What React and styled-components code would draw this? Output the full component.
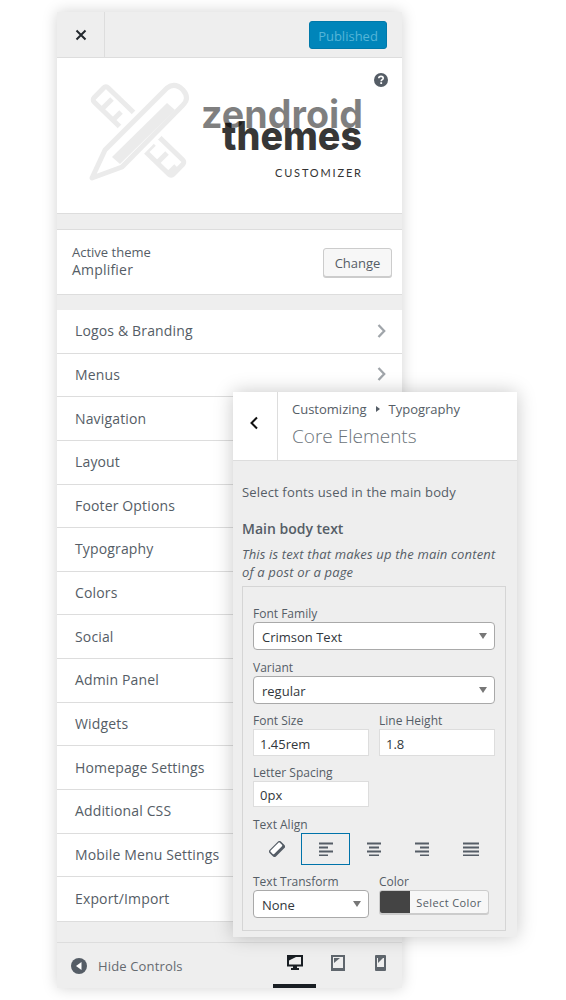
import React from 'react';
import styled, { createGlobalStyle } from 'styled-components';

const GlobalStyle = createGlobalStyle`
  html, body { margin: 0; padding: 0; background: #fff; }
  body {
    font-family: "Open Sans", "Noto Sans", "Liberation Sans", sans-serif;
    color: #555d66;
  }
  * { box-sizing: border-box; }
`;

const Stage = styled.div`
  position: relative;
  width: 566px;
  height: 1000px;
  padding: 12px 0 0 57px;
  overflow: hidden;
`;

/* main customizer column */
const Panel = styled.div`
  width: 345px;
  height: 976px;
  display: flex;
  flex-direction: column;
  background: #eee;
  box-shadow: 0 0 14px rgba(0, 0, 0, 0.18);
`;

const Header = styled.div`
  height: 46px;
  flex: none;
  display: flex;
  align-items: center;
  justify-content: space-between;
  padding-right: 15px;
  border-bottom: 1px solid #ddd;
`;

const CloseCell = styled.div`
  width: 48px;
  height: 45px;
  display: flex;
  align-items: center;
  justify-content: center;
  border-right: 1px solid #ddd;
  color: #23282d;
`;

const PublishButton = styled.div`
  width: 78px;
  height: 28px;
  margin-top: 1px;
  padding-top: 1px;
  display: flex;
  align-items: center;
  justify-content: center;
  font-size: 13px;
  color: #55b5d8;
  background: #0085ba;
  border: 1px solid #0079aa;
  border-radius: 3px;
`;

const LogoBox = styled.div`
  position: relative;
  height: 156px;
  flex: none;
  background: #fff;
  border-bottom: 1px solid #ddd;
`;

const HelpIcon = styled.svg`
  position: absolute;
  top: 15px;
  right: 14px;
`;

const Gap = styled.div`
  height: ${(p) => p.$h}px;
  flex: none;
`;

const ThemeBox = styled.div`
  height: 66px;
  flex: none;
  display: flex;
  align-items: center;
  justify-content: space-between;
  padding: 0 10px 0 15px;
  background: #fff;
  border-top: 1px solid #ddd;
  border-bottom: 1px solid #ddd;
`;

const ThemeText = styled.div`
  padding-bottom: 2px;
`;

const ThemeLabel = styled.div`
  font-size: 13px;
  line-height: 18px;
`;

const ThemeName = styled.div`
  font-size: 14px;
  line-height: 18px;
  font-weight: 500;
  letter-spacing: 0.2px;
`;

const ChangeButton = styled.div`
  width: 69px;
  height: 29px;
  padding-top: 1px;
  display: flex;
  align-items: center;
  justify-content: center;
  font-size: 13px;
  background: #f7f7f7;
  border: 1px solid #ccc;
  border-radius: 3px;
  box-shadow: 0 1px 0 #ccc;
`;

const Menu = styled.div`
  flex: none;
  background: #fff;
  border-bottom: 1px solid #ddd;
`;

const MenuRow = styled.div`
  height: 43.64px;
  display: flex;
  align-items: center;
  justify-content: space-between;
  padding: 0 16px 1px 18px;
  font-size: 14px;
  font-weight: 500;
  letter-spacing: 0.15px;
  border-bottom: ${(p) => (p.$last ? 'none' : '1px solid #ddd')};
`;

const Chevron = styled.svg`
  color: #a0a5aa;
`;

const Footer = styled.div`
  position: relative;
  height: 46px;
  margin-top: auto;
  flex: none;
  display: flex;
  align-items: center;
  padding-left: 14px;
  border-top: 1px solid #ddd;
`;

const HideLabel = styled.div`
  margin-left: 11px;
  font-size: 13px;
  letter-spacing: 0.15px;
  color: #656a70;
`;

const Devices = styled.div`
  margin-left: auto;
  display: flex;
  height: 100%;
`;

const DeviceTab = styled.div`
  width: 43px;
  display: flex;
  align-items: center;
  justify-content: center;
  padding-bottom: 1px;
  color: ${(p) => (p.$active ? '#191e23' : '#5f666d')};
  border-bottom: 4px solid ${(p) => (p.$active ? '#191e23' : 'transparent')};
`;

/* floating typography section */
const Section = styled.div`
  position: absolute;
  left: 233px;
  top: 392px;
  width: 284px;
  height: 545px;
  background: #eee;
  box-shadow: 0 0 18px rgba(0, 0, 0, 0.22);
`;

const SectionHead = styled.div`
  height: 69px;
  display: flex;
  background: #fff;
  border-bottom: 1px solid #ddd;
`;

const BackCell = styled.div`
  width: 45px;
  padding: 0 3px 6px 0;
  display: flex;
  align-items: center;
  justify-content: center;
  border-right: 1px solid #ddd;
  color: #111;
`;

const HeadText = styled.div`
  padding: 8px 0 0 14px;
`;

const Crumbs = styled.div`
  display: flex;
  align-items: center;
  gap: 9px;
  font-size: 13px;
  line-height: 18px;
`;

const CrumbArrow = styled.svg`
  color: #555d66;
`;

const SectionTitle = styled.div`
  margin-top: 5px;
  font-size: 19px;
  line-height: 26px;
  font-weight: 300;
  color: #6b737a;
`;

const SectionBody = styled.div`
  padding: 22px 11px 0 9px;
`;

const Intro = styled.div`
  font-size: 13px;
  line-height: 18px;
  letter-spacing: 0.16px;
`;

const GroupTitle = styled.div`
  margin-top: 18px;
  font-size: 14px;
  line-height: 20px;
  font-weight: 600;
`;

const GroupNote = styled.div`
  margin-top: 6px;
  font-size: 13px;
  line-height: 18px;
  font-style: italic;
  letter-spacing: 0.16px;
`;

const Fields = styled.div`
  height: 345px;
  margin-top: 5px;
  padding: 18px 10px 0;
  border: 1px solid #d5d5d5;
`;

const FieldLabel = styled.div`
  font-size: 12px;
  line-height: 16px;
  padding-top: 1px;
`;

const FieldRow = styled.div`
  display: grid;
  grid-template-columns: 116px 116px;
  gap: 10px;
  margin-top: ${(p) => p.$top || 0}px;
`;

const Stacked = styled.div`
  margin-top: ${(p) => p.$top || 0}px;
  width: ${(p) => p.$w || 'auto'};
`;

const SelectBox = styled.div`
  position: relative;
  height: 28px;
  display: flex;
  align-items: center;
  padding: 2px 0 0 8px;
  font-size: 13px;
  color: #32373c;
  background: #fff;
  border: 1px solid #a9a9a9;
  border-radius: 4px;
`;

const Caret = styled.span`
  position: absolute;
  right: 7px;
  top: 10px;
  width: 0;
  height: 0;
  border-left: 4px solid transparent;
  border-right: 4px solid transparent;
  border-top: 6px solid #777;
`;

const TextInput = styled.div`
  height: ${(p) => p.$h || 26}px;
  display: flex;
  align-items: center;
  padding: 2px 0 0 6px;
  font-size: 13px;
  color: #32373c;
  background: #fff;
  border: 1px solid #ddd;
`;

const AlignRow = styled.div`
  display: grid;
  grid-template-columns: repeat(5, 48.4px);
  height: 32px;
`;

const AlignCell = styled.div`
  display: flex;
  align-items: center;
  justify-content: center;
  color: #555d66;
  border: 1px solid ${(p) => (p.$active ? '#0073aa' : 'transparent')};
`;

const ColorButton = styled.div`
  width: 110px;
  height: 24px;
  display: flex;
  font-size: 11px;
  background: #f7f7f7;
  border: 1px solid #ccc;
  border-radius: 3px;
  box-shadow: 0 1px 0 #ccc;
  overflow: hidden;
`;

const Swatch = styled.div`
  width: 30px;
  background: #444;
`;

const ColorText = styled.div`
  flex: 1;
  display: flex;
  align-items: center;
  justify-content: center;
  letter-spacing: 0.4px;
`;

const menuItems = [
  'Logos & Branding', 'Menus', 'Navigation', 'Layout', 'Footer Options',
  'Typography', 'Colors', 'Social', 'Admin Panel', 'Widgets',
  'Homepage Settings', 'Additional CSS', 'Mobile Menu Settings', 'Export/Import',
];

const LogoArt = () => (
  <svg width="345" height="155" style={{ display: 'block' }}>
    {/* ruler with the pencil laid over it */}
    <g transform="translate(28 17)" fill="none" strokeLinejoin="round">
      <g stroke="#ebebeb" strokeWidth="5">
        <rect x="-55" y="-10" width="110" height="20" rx="3" transform="translate(53.5 56) rotate(44)" />
        <path d="M18 33L27 24M29 44L36 37M39 55L46 48" />
        <path d="M62 76L69 69M73 87L82 78M84 98L91 91" />
      </g>
      <path d="M7 103L20 75L82 13Q90 7 98 15Q105 23 98 30L37 92Z" fill="#fff" stroke="#fff" strokeWidth="13" />
      <path d="M7 103L20 75L82 13Q90 7 98 15Q105 23 98 30L37 92Z" stroke="#ebebeb" strokeWidth="5" />
      <path d="M27 82L35 89L90 35L82 28Z" fill="#ebebeb" />
    </g>
    {/* word mark, real text fitted to the logo width */}
    <text x="144" y="70" textLength="162" lengthAdjust="spacingAndGlyphs" fontFamily="Inter, sans-serif" fontWeight="700" fontSize="39" fill="#000" fillOpacity="0.5">zendroid</text>
    <text x="165" y="92" textLength="140" lengthAdjust="spacingAndGlyphs" fontFamily="Inter, sans-serif" fontWeight="800" fontSize="40" fill="#000" fillOpacity="0.8">themes</text>
    <text x="218" y="119" textLength="86" fontFamily="Lato, sans-serif" fontWeight="400" fontSize="11" fill="#333">CUSTOMIZER</text>
  </svg>
);

const DesktopIcon = () => (
  <svg width="16" height="16" viewBox="0 0 16 16" fill="currentColor">
    <path fillRule="evenodd" d="M0 0h16v11.5H10V13h2v2H4v-2h2v-1.5H0zM2 2v7.5h12V2z" />
    <path d="M2 2h7L2 5.5z" />
  </svg>
);

const TabletIcon = () => (
  <svg width="14" height="16" viewBox="0 0 14 16" fill="currentColor">
    <path fillRule="evenodd" d="M0 0h14v16H0zM2 2v11h10V2z" />
    <path d="M3 3h6L3 8z" />
  </svg>
);

const MobileIcon = () => (
  <svg width="11" height="16" viewBox="0 0 11 16" fill="currentColor">
    <path fillRule="evenodd" d="M1 0h9q1 0 1 1v14q0 1-1 1H1q-1 0-1-1V1q0-1 1-1zM2 3v9h7V3z" />
    <path d="M3 3h5L3 8z" />
  </svg>
);

const AlignIcon = ({ lines }) => (
  <svg width="16" height="14" viewBox="0 0 16 14" fill="currentColor">
    {lines.map(([x, w], i) => (
      <rect key={i} x={x} y={i * 4 + 0.5} width={w} height="2" />
    ))}
  </svg>
);

const EraserIcon = () => (
  <svg width="16" height="16" viewBox="0 0 16 16">
    <g transform="rotate(-45 8 8)">
      <rect x="0" y="3.5" width="16" height="9" rx="2" fill="#555d66" />
      <rect x="1.5" y="4.5" width="13" height="5" rx="1" fill="#fff" />
    </g>
  </svg>
);

const App = () => (
  <Stage>
    <GlobalStyle />
    <Panel>
      <Header>
        <CloseCell>
          <svg width="12" height="12" viewBox="0 0 12 12" stroke="currentColor" strokeWidth="2">
            <path d="M1.5 1.5l9 9M10.5 1.5l-9 9" />
          </svg>
        </CloseCell>
        <PublishButton>Published</PublishButton>
      </Header>
      <LogoBox>
        <LogoArt />
        <HelpIcon width="14" height="14" viewBox="0 0 14 14">
          <circle cx="7" cy="7" r="7" fill="#555d66" />
          <path d="M4.8 5.3C4.8 4 5.8 3.4 7 3.4s2.2.7 2.2 1.8c0 1.6-2 1.4-2 3" fill="none" stroke="#fff" strokeWidth="1.6" />
          <rect x="6.3" y="9.2" width="1.8" height="1.8" fill="#fff" />
        </HelpIcon>
      </LogoBox>
      <Gap $h={15} />
      <ThemeBox>
        <ThemeText>
          <ThemeLabel>Active theme</ThemeLabel>
          <ThemeName>Amplifier</ThemeName>
        </ThemeText>
        <ChangeButton>Change</ChangeButton>
      </ThemeBox>
      <Gap $h={15} />
      <Menu>
        {menuItems.map((item, i) => (
          <MenuRow key={item} $last={i === menuItems.length - 1}>
            {item}
            <Chevron width="9" height="14" viewBox="0 0 9 14" fill="none" stroke="currentColor" strokeWidth="2.3">
              <path d="M1.5 1L7.2 7l-5.7 6" />
            </Chevron>
          </MenuRow>
        ))}
      </Menu>
      <Footer>
        <svg width="16" height="16" viewBox="0 0 16 16">
          <circle cx="8" cy="8" r="8" fill="#555d66" />
          <path d="M10.5 4v8L5 8z" fill="#fff" />
        </svg>
        <HideLabel>Hide Controls</HideLabel>
        <Devices>
          <DeviceTab $active><DesktopIcon /></DeviceTab>
          <DeviceTab><TabletIcon /></DeviceTab>
          <DeviceTab><MobileIcon /></DeviceTab>
        </Devices>
      </Footer>
    </Panel>

    <Section>
      <SectionHead>
        <BackCell>
          <svg width="10" height="14" viewBox="0 0 10 14" fill="none" stroke="currentColor" strokeWidth="2">
            <path d="M8 1.5L2.5 7 8 12.5" />
          </svg>
        </BackCell>
        <HeadText>
          <Crumbs>
            Customizing
            <CrumbArrow width="4" height="6" viewBox="0 0 4 6" fill="currentColor"><path d="M0 0l4 3-4 3z" /></CrumbArrow>
            Typography
          </Crumbs>
          <SectionTitle>Core Elements</SectionTitle>
        </HeadText>
      </SectionHead>
      <SectionBody>
        <Intro>Select fonts used in the main body</Intro>
        <GroupTitle>Main body text</GroupTitle>
        <GroupNote>This is text that makes up the main content of a post or a page</GroupNote>
        <Fields>
          <FieldLabel>Font Family</FieldLabel>
          <SelectBox>Crimson Text<Caret /></SelectBox>
          <Stacked $top={9}>
            <FieldLabel>Variant</FieldLabel>
            <SelectBox>regular<Caret /></SelectBox>
          </Stacked>
          <FieldRow $top={8}>
            <div>
              <FieldLabel>Font Size</FieldLabel>
              <TextInput $h={27}>1.45rem</TextInput>
            </div>
            <div>
              <FieldLabel>Line Height</FieldLabel>
              <TextInput $h={27}>1.8</TextInput>
            </div>
          </FieldRow>
          <Stacked $top={8} $w="116px">
            <FieldLabel>Letter Spacing</FieldLabel>
            <TextInput>0px</TextInput>
          </Stacked>
          <Stacked $top={9}>
            <FieldLabel>Text Align</FieldLabel>
            <AlignRow>
              <AlignCell><EraserIcon /></AlignCell>
              <AlignCell $active><AlignIcon lines={[[1, 14], [1, 9], [1, 14], [1, 9]]} /></AlignCell>
              <AlignCell><AlignIcon lines={[[1, 14], [3, 10], [1, 14], [3, 10]]} /></AlignCell>
              <AlignCell><AlignIcon lines={[[1, 14], [6, 9], [1, 14], [6, 9]]} /></AlignCell>
              <AlignCell><AlignIcon lines={[[0, 16], [0, 16], [0, 16], [0, 16]]} /></AlignCell>
            </AlignRow>
          </Stacked>
          <FieldRow $top={8}>
            <div>
              <FieldLabel>Text Transform</FieldLabel>
              <SelectBox>None<Caret /></SelectBox>
            </div>
            <div>
              <FieldLabel>Color</FieldLabel>
              <ColorButton>
                <Swatch />
                <ColorText>Select Color</ColorText>
              </ColorButton>
            </div>
          </FieldRow>
        </Fields>
      </SectionBody>
    </Section>
  </Stage>
);

export default App;
